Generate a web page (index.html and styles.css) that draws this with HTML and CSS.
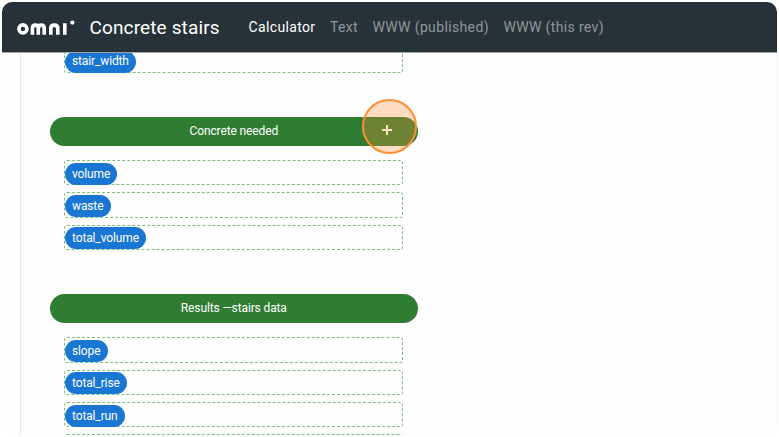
FILE: index.html
```
<!DOCTYPE html>
<html lang="en">
<head>
<meta charset="utf-8">
<title>Concrete stairs</title>
<link rel="stylesheet" href="styles.css">
</head>
<body>
<div class="app">
  <header class="topbar">
    <svg class="logo" width="60" height="18" viewBox="0 0 60 18" fill="none" stroke="#fff" stroke-width="3.6" role="img" aria-label="omni">
      <circle cx="6.9" cy="10.9" r="4"/>
      <path d="M16.4 16.8V10.4Q16.4 7.1 19.4 7.1Q22.3 7.1 22.3 10.4V16.8M22.3 10.4Q22.3 7.1 25.2 7.1Q28.2 7.1 28.2 10.4V16.8M34.8 16.8V10.4Q34.8 7.1 38.3 7.1Q41.8 7.1 41.8 10.4V16.8M48.8 5.3V16.8"/>
      <circle cx="56.4" cy="4.6" r="2.1" fill="#fff" stroke="none"/>
    </svg>
    <h1 class="title">Concrete stairs</h1>
    <nav class="tabs">
      <a class="tab active">Calculator</a>
      <a class="tab">Text</a>
      <a class="tab">WWW (published)</a>
      <a class="tab">WWW (this rev)</a>
    </nav>
  </header>
  <main class="content">
    <div class="panel">
      <section class="group">
        <div class="slot first"><span class="pill">stair_width</span></div>
      </section>
      <section class="group">
        <h2 class="heading">Concrete needed
          <span class="marker"><svg width="10" height="10" viewBox="0 0 10 10" stroke="#ffe2c8" stroke-width="2"><path d="M5 0V10M0 5H10"/></svg></span>
        </h2>
        <div class="slot"><span class="pill">volume</span></div>
        <div class="slot"><span class="pill">waste</span></div>
        <div class="slot"><span class="pill">total_volume</span></div>
      </section>
      <section class="group">
        <h2 class="heading">Results —stairs data</h2>
        <div class="slot"><span class="pill">slope</span></div>
        <div class="slot"><span class="pill">total_rise</span></div>
        <div class="slot"><span class="pill">total_run</span></div>
        <div class="slot"></div>
      </section>
    </div>
  </main>
</div>
</body>
</html>
```
FILE: styles.css
```
* { box-sizing: border-box; }
body {
  margin: 0;
  padding: 2px;
  background: #fff;
  font-family: Roboto, "Liberation Sans", sans-serif;
}
.app {
  display: flex;
  flex-direction: column;
  width: 775px;
  height: 433px;
  overflow: hidden;
  border-radius: 10px;
  background: #fefefe;
}
.topbar {
  display: flex;
  flex: none;
  align-items: center;
  height: 51px;
  padding-left: 14px;
  background: #273238;
  border-bottom: 1px solid #a0a5a7;
}
.logo { flex: none; }
.title {
  width: 159px;
  margin: 0 0 0 13.5px;
  color: #fff;
  font-size: 19px;
  font-weight: 400;
  letter-spacing: 0.13px;
  white-space: nowrap;
}
.tabs { display: flex; gap: 14.5px; }
.tab {
  color: #90969a;
  font-size: 14px;
  font-weight: 400;
  letter-spacing: 0.36px;
  white-space: nowrap;
}
.tab.active { color: #fff; }
.content {
  flex: 1;
  min-height: 0;
  overflow: hidden;
  padding-left: 17px;
  border: solid #fafafa;
  border-width: 0 1px;
}
.panel {
  width: 756px;
  height: 382px;
  padding-left: 29px;
  border-left: 1px solid #e8e8e8;
}
.group {
  width: 368px;
  margin-bottom: 44px;
}
.heading {
  position: relative;
  height: 28.6px;
  margin: 0 0 14.4px -0.4px;
  border-radius: 15px;
  background: #2e7d32;
  color: #fff;
  font-size: 12px;
  font-weight: 400;
  letter-spacing: -0.13px;
  line-height: 28px;
  text-align: center;
}
.marker {
  position: absolute;
  left: 312.4px;
  top: -18px;
  display: flex;
  align-items: center;
  justify-content: center;
  width: 55px;
  height: 55px;
  border: 2px solid #ff8f35;
  border-radius: 50%;
  background: rgba(255, 143, 53, 0.3);
}
.marker svg { margin: 7px 5px 0 0; }
.slot {
  display: flex;
  align-items: flex-end;
  width: 339px;
  height: 25.4px;
  margin: 0 0 6.9px 14px;
  border: 1px dashed #7cbd80;
  border-radius: 3px;
}
.slot:last-child { margin-bottom: 0; }
.group:nth-child(2) { height: 133.3px; }
.slot.first { height: 20px; border-top: 0; border-radius: 0 0 3px 3px; }
.slot.first .pill { line-height: 21px; }
.pill {
  flex: none;
  height: 22px;
  margin-bottom: -0.5px;
  padding: 0 7.2px 0 7px;
  border-radius: 11px;
  background: #1976d2;
  color: #fff;
  font-size: 12px;
  letter-spacing: -0.13px;
  line-height: 22.4px;
}
```
